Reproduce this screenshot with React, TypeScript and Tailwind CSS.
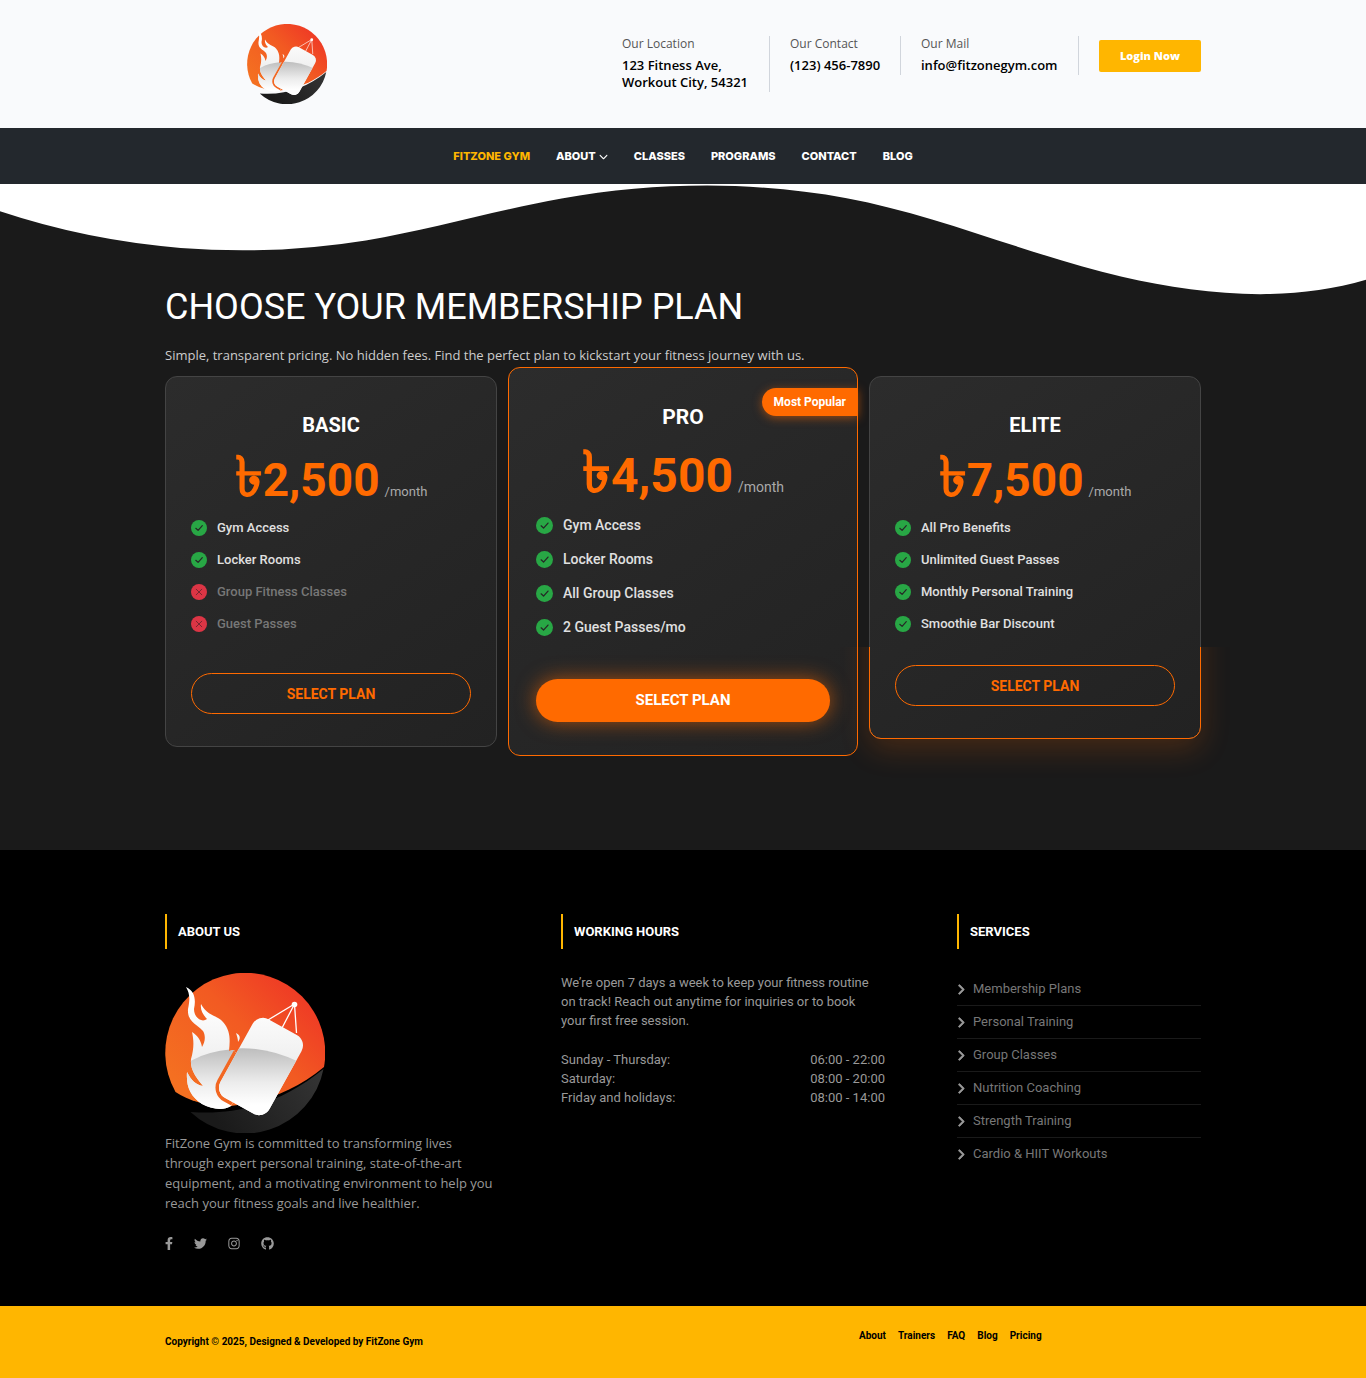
import React, { useId } from "react";
import { FaFacebookF, FaGithub, FaInstagram, FaTwitter } from "react-icons/fa";
import { FaAngleRight, FaChevronDown } from "react-icons/fa6";

const OPEN = "font-['Open_Sans',sans-serif]";

function Logo({ className }: { className: string }) {
  const id = useId();
  return (
    <svg viewBox="0 0 160 160" className={className} role="img" aria-label="FitZone Gym">
      <defs>
        <linearGradient id={id + "o"} x1="20" y1="120" x2="125" y2="15" gradientUnits="userSpaceOnUse">
          <stop offset="0" stopColor="#f47021" />
          <stop offset="0.6" stopColor="#f25a22" />
          <stop offset="1" stopColor="#ef3d25" />
        </linearGradient>
        <linearGradient id={id + "d"} x1="60" y1="160" x2="150" y2="100" gradientUnits="userSpaceOnUse">
          <stop offset="0" stopColor="#1a1a1a" />
          <stop offset="1" stopColor="#333333" />
        </linearGradient>
        <linearGradient id={id + "w"} x1="0" y1="30" x2="0" y2="85" gradientUnits="userSpaceOnUse">
          <stop offset="0" stopColor="#ffffff" />
          <stop offset="1" stopColor="#f0f0f0" />
        </linearGradient>
        <linearGradient id={id + "g"} x1="0" y1="75" x2="0" y2="132" gradientUnits="userSpaceOnUse">
          <stop offset="0" stopColor="#bdbdbd" />
          <stop offset="0.6" stopColor="#ececec" />
          <stop offset="1" stopColor="#ffffff" />
        </linearGradient>
        <clipPath id={id + "f"}>
          <path d="M21 14 C30 18 31 27 29 36 C29 45 37 50 42 46 C38 42 35 37 36 31 C42 43 52 42 58 49 C66 58 65 68 64 78 L69 77 L82 100 L66 133 C58 138 46 136 37 131 C25 123 21 113 22 99 C26 107 31 112 38 113 C31 104 25 97 26 86 C29 76 29 68 27 59 C32 62 36 67 37 74 C40 69 41 63 38 58 C32 51 22 49 23 36 C25 26 25 21 21 14 Z" />
          <path d="M71 60 C75 62 76 65 73 69 C73 66 72 63 71 60 Z" />
        </clipPath>
        <clipPath id={id + "b"}>
          <rect x="-28" y="-45" width="56" height="90" rx="12" transform="translate(96 93.500) rotate(29)" />
        </clipPath>
      </defs>
      <path d="M10.500 119 A80 80 0 1 1 159 94 C135 114 110 124 86 130 L66 133 C45 134 24 128 10.500 119 Z" fill={`url(#${id}o)`} />
      <path d="M25.500 139 C78 143 120 127 158.500 96 A80 80 0 0 1 25.500 139 Z" fill={`url(#${id}d)`} />
      <path d="M129.500 31 L103 47 M129.500 31 L117 55 M129.500 31 L131.500 60" stroke="#fff" strokeWidth="1.300" />
      <circle cx="129.500" cy="31.500" r="2.800" fill="#fff" />
      <g clipPath={`url(#${id}f)`}>
        <rect width="160" height="160" fill={`url(#${id}w)`} />
        <path d="M0 100 Q26 88 36 83 Q84 65 140 93 V160 H0 Z" fill={`url(#${id}g)`} />
        <rect x="-28" y="-45" width="56" height="90" rx="12" transform="translate(96 93.500) rotate(29)" fill="none" stroke="#f26722" strokeWidth="7" />
      </g>
      <g clipPath={`url(#${id}b)`}>
        <rect width="160" height="160" fill={`url(#${id}w)`} />
        <path d="M36 83 Q84 65 134 89 V160 H36 Z" fill={`url(#${id}g)`} />
      </g>
    </svg>
  );
}

function HeaderItem({ label, className, children }: { label: string; className: string; children: React.ReactNode }) {
  return (
    <div className={`${className} border-r border-gray-300 ${OPEN}`}>
      <p className="text-xs leading-4 text-[#555]">{label}</p>
      <p className="pt-[5px] pb-px text-[13px] leading-[17px] font-semibold text-black">{children}</p>
    </div>
  );
}

type Feature = { text: string; off?: boolean };
type Plan = { name: string; price: string; features: Feature[] };

const plans: Plan[] = [
  {
    name: "BASIC",
    price: "2,500",
    features: [
      { text: "Gym Access" },
      { text: "Locker Rooms" },
      { text: "Group Fitness Classes", off: true },
      { text: "Guest Passes", off: true },
    ],
  },
  {
    name: "PRO",
    price: "4,500",
    features: [{ text: "Gym Access" }, { text: "Locker Rooms" }, { text: "All Group Classes" }, { text: "2 Guest Passes/mo" }],
  },
  {
    name: "ELITE",
    price: "7,500",
    features: [
      { text: "All Pro Benefits" },
      { text: "Unlimited Guest Passes" },
      { text: "Monthly Personal Training" },
      { text: "Smoothie Bar Discount" },
    ],
  },
];

const cardBase = "relative flex flex-col rounded-xl border bg-linear-145 from-[#2c2c2c] to-[#222]";

function FeatureIcon({ off, className }: { off?: boolean; className: string }) {
  return (
    <svg viewBox="0 0 16 16" className={className} fill="none" stroke={off ? "#7a2630" : "#262626"} strokeLinecap="round" strokeLinejoin="round" aria-hidden="true">
      <circle cx="8" cy="8" r="8" fill={off ? "#dc3545" : "#28a745"} stroke="none" />
      {off ? <path d="M5.200 5.200 L10.800 10.800 M10.800 5.200 L5.200 10.800" strokeWidth="1" /> : <path d="M4.800 8.300 L7.100 10.400 L11.300 5.700" strokeWidth="1.200" />}
    </svg>
  );
}

function PlanCard({ plan }: { plan: Plan }) {
  return (
    <article className={`${cardBase} border-[#444] px-[25px] pt-9 pb-8`}>
      <h2 className="text-center text-xl leading-6 font-bold text-white">{plan.name}</h2>
      <p className="mt-[18px] flex h-[50px] items-baseline justify-center text-[13px] leading-5 text-[#aaa]">
        <span className="text-[56px] leading-[44px] font-semibold text-[#ff6a00]">৳</span>
        <span className="mr-[5px] text-[46px] leading-[50px] font-bold text-[#ff6a00]">{plan.price}</span>
        /month
      </p>
      <ul className="mt-[13px] flex flex-col gap-3">
        {plan.features.map((f) => (
          <li key={f.text} className={`flex items-center gap-2.5 text-[13px] leading-5 font-medium ${f.off ? "text-[#777]" : "text-[#e0e0e0]"}`}>
            <FeatureIcon off={f.off} className="size-4" />
            {f.text}
          </li>
        ))}
      </ul>
      <button type="button" className="mt-auto h-[41px] w-full rounded-full border border-[#ff6a00] text-sm font-bold text-[#ff6a00]">
        SELECT PLAN
      </button>
    </article>
  );
}

function FeaturedCard({ plan }: { plan: Plan }) {
  return (
    <article className={`${cardBase} -mx-[9px] -my-[9px] border-[#ff6a00] px-[27px] pt-[37px] pb-[33px]`}>
      <span className="absolute top-5 -right-px rounded-l-full bg-[#ff6a00] px-3 py-1.5 text-xs leading-4 font-bold text-white shadow-[0_2px_10px_rgba(255,106,0,0.5)]">
        Most Popular
      </span>
      <h2 className="text-center text-[21px] leading-[25px] font-bold text-white">{plan.name}</h2>
      <p className="mt-[19px] flex h-[52px] items-baseline justify-center text-sm leading-5 text-[#aaa]">
        <span className="text-[58px] leading-[46px] font-semibold text-[#ff6a00]">৳</span>
        <span className="mr-[5px] text-5xl leading-[52px] font-bold text-[#ff6a00]">{plan.price}</span>
        /month
      </p>
      <ul className="mt-3.5 flex flex-col gap-[13px]">
        {plan.features.map((f) => (
          <li key={f.text} className="flex items-center gap-2.5 text-sm leading-[21px] font-medium text-[#e0e0e0]">
            <FeatureIcon className="size-[17px]" />
            {f.text}
          </li>
        ))}
      </ul>
      <button
        type="button"
        className="mt-auto h-[43px] w-full rounded-full bg-[#ff6a00] text-[15px] font-bold text-white shadow-[0_0_20px_rgba(255,106,0,0.6)]"
      >
        SELECT PLAN
      </button>
    </article>
  );
}

function FooterTitle({ children }: { children: React.ReactNode }) {
  return <h2 className="border-l-2 border-[#ffb600] pl-[11px] text-[13px] leading-[35px] font-bold text-white">{children}</h2>;
}

const hours = [
  ["Sunday - Thursday:", "06:00 - 22:00"],
  ["Saturday:", "08:00 - 20:00"],
  ["Friday and holidays:", "08:00 - 14:00"],
];
const services = ["Membership Plans", "Personal Training", "Group Classes", "Nutrition Coaching", "Strength Training", "Cardio & HIIT Workouts"];
const socials = [
  { name: "Facebook", Icon: FaFacebookF, size: "h-[13px] w-2" },
  { name: "Twitter", Icon: FaTwitter, size: "size-[13px]" },
  { name: "Instagram", Icon: FaInstagram, size: "h-[13px] w-3" },
  { name: "GitHub", Icon: FaGithub, size: "size-[13px]" },
];

export default function App() {
  return (
    <div className="bg-white font-[Roboto,sans-serif]">
      <header className="bg-[#f9fafc] py-6">
        <div className="mx-auto flex max-w-[1036px] items-start justify-between">
          <a href="#home" className="flex w-[244px] justify-center">
            <Logo className="size-20" />
          </a>
          <div className="flex items-start gap-5 pt-3">
            <HeaderItem label="Our Location" className="w-[148px]">
              123 Fitness Ave,
              <br />
              Workout City, 54321
            </HeaderItem>
            <HeaderItem label="Our Contact" className="w-[111px]">(123) 456-7890</HeaderItem>
            <HeaderItem label="Our Mail" className="w-[158px]">info@fitzonegym.com</HeaderItem>
            <button type="button" className={`mt-1 h-8 w-[102px] rounded-xs bg-[#ffb600] text-[11px] font-extrabold text-white ${OPEN}`}>
              Login Now
            </button>
          </div>
        </div>
      </header>

      <nav className="flex h-14 items-center justify-center gap-[26px] bg-[#23282d] font-[Inter,sans-serif] text-[11px] font-extrabold text-white">
        <a href="#home" className="text-[#ffb600]">FITZONE GYM</a>
        <a href="#about" className="flex items-center gap-[3px]">
          ABOUT <FaChevronDown className="size-[9px]" />
        </a>
        <a href="#classes">CLASSES</a>
        <a href="#programs">PROGRAMS</a>
        <a href="#contact">CONTACT</a>
        <a href="#blog">BLOG</a>
      </nav>

      <main className="relative bg-[#1a1a1a] pt-[99px] pb-[103px]">
        <svg viewBox="0 0 1200 120" preserveAspectRatio="none" className="absolute inset-x-0 top-0 h-[120px] w-full" aria-hidden="true">
          <path
            fill="#fff"
            d="M321.390 56.440c58-10.790 114.160-30.130 172-41.860 82.390-16.720 168.190-17.730 250.450-.39C823.780 31 906.670 72 985.660 92.830c70.050 18.480 146.530 26.090 214.340 3V0H0v27.350A600.210 600.210 0 0 0 321.390 56.440z"
          />
        </svg>
        <div className="relative mx-auto max-w-[1036px]">
          <h1 className="text-4xl leading-[48px] text-white">CHOOSE YOUR MEMBERSHIP PLAN</h1>
          <p className={`mt-3.5 text-[13px] leading-5 text-[#ccc] ${OPEN}`}>
            Simple, transparent pricing. No hidden fees. Find the perfect plan to kickstart your fitness journey with us.
          </p>
          <div className="mt-[11px] grid grid-cols-3 gap-5">
            <div className="grid min-h-[371px]">
              <PlanCard plan={plans[0]} />
            </div>
            <div className="grid min-h-[371px]">
              <FeaturedCard plan={plans[1]} />
            </div>
            <div className="relative mb-2 grid">
              <PlanCard plan={plans[2]} />
              <span className="pointer-events-none absolute inset-0 rounded-xl border border-[#ff6a00] shadow-[0_10px_30px_rgba(255,106,0,0.2)] [clip-path:inset(271px_-60px_-60px_-60px)]" />
            </div>
          </div>
        </div>
      </main>

      <footer className="bg-black text-[#999]">
        <div className="mx-auto grid max-w-[1036px] grid-cols-[324fr_324fr_244fr] gap-[72px] pt-16 pb-14">
          <section>
            <FooterTitle>ABOUT US</FooterTitle>
            <Logo className="mt-6 size-40" />
            <p className={`-mr-3 text-[13px] leading-5 ${OPEN}`}>
              FitZone Gym is committed to transforming lives through expert personal training, state-of-the-art equipment, and a motivating environment to help you reach your fitness goals and live healthier.
            </p>
            <div className="mt-6 flex gap-[21px]">
              {socials.map(({ name, Icon, size }) => (
                <a key={name} href={`#${name}`} aria-label={name}>
                  <Icon className={size} />
                </a>
              ))}
            </div>
          </section>
          <section>
            <FooterTitle>WORKING HOURS</FooterTitle>
            <p className="mt-6 pr-2 text-[13px] leading-[19px]">
              We’re open 7 days a week to keep your fitness routine on track! Reach out anytime for inquiries or to book your first free session.
            </p>
            <dl className="mt-5 text-[13px] leading-[19px]">
              {hours.map(([day, time]) => (
                <div key={day} className="flex justify-between">
                  <dt>{day}</dt>
                  <dd>{time}</dd>
                </div>
              ))}
            </dl>
          </section>
          <section>
            <FooterTitle>SERVICES</FooterTitle>
            <ul className="mt-6 divide-y divide-[#1a1a1a]">
              {services.map((s) => (
                <li key={s}>
                  <a href="#services" className="flex h-8 items-center gap-2 text-[13px] text-[#777]">
                    <FaAngleRight className="h-[13px] w-2 stroke-current stroke-[30px] text-[#999]" />
                    {s}
                  </a>
                </li>
              ))}
            </ul>
          </section>
        </div>
        <div className="bg-[#ffb600] text-black">
          <div className="mx-auto flex h-[72px] max-w-[1036px] justify-between text-[10px] leading-4 font-bold">
            <p className="pt-7">Copyright © 2025, Designed &amp; Developed by FitZone Gym</p>
            <div className="flex w-[342px] gap-3 pt-[22px]">
              <a href="#about">About</a>
              <a href="#trainers">Trainers</a>
              <a href="#faq">FAQ</a>
              <a href="#blog">Blog</a>
              <a href="#pricing">Pricing</a>
            </div>
          </div>
        </div>
      </footer>
    </div>
  );
}
